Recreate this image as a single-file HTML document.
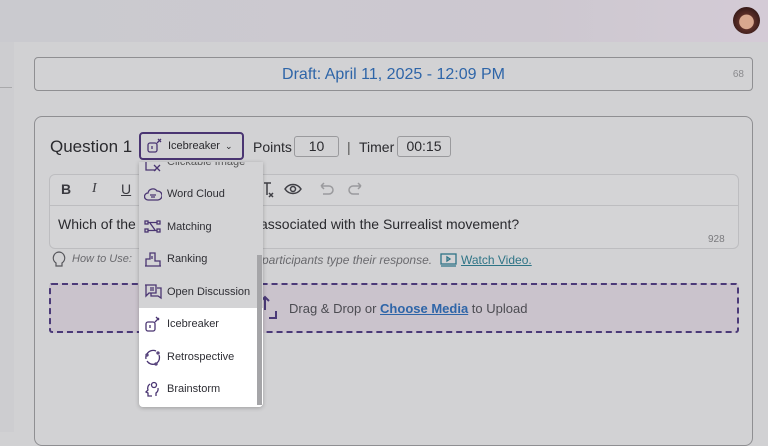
<!DOCTYPE html>
<html><head><meta charset="utf-8"><style>
*{box-sizing:border-box;margin:0;padding:0}
body{width:768px;height:432px;overflow:hidden;background:#d1d1d3;font-family:"Liberation Sans",sans-serif;position:relative;color:#2a2a2e}
.top{position:absolute;left:0;top:0;width:768px;height:42px;background:linear-gradient(90deg,#cacacf,#cdc8d0 70%,#d4cbd6)}
.side{position:absolute;left:0;top:42px;width:14px;height:390px;background:#cdcdd0}
.side:after{content:"";position:absolute;left:0;top:45px;width:12px;height:1px;background:#a9a9ab}
.av{position:absolute;left:733px;top:7px;width:27px;height:27px;border-radius:50%;background:radial-gradient(circle at 50% 55%,#d9a88f 0 35%,#5b2e27 38%,#3a1c1a 70%)}
.draft{position:absolute;left:34px;top:57px;width:719px;height:34px;border:1px solid #8f8f92;border-radius:4px;background:#d2d2d4;text-align:center;line-height:33px;color:#2e65a8;font-size:16px}
.draft span{position:absolute;right:8px;top:0;font-size:10px;color:#8a8a8d}
.card{position:absolute;left:34px;top:116px;width:719px;height:330px;border:1px solid #8f8f92;border-radius:8px;background:#d2d2d4}
.q{position:absolute;left:50px;top:137px;font-size:17px;line-height:20px}
.sel{position:absolute;left:139px;top:132px;width:105px;height:28px;border:2px solid #4a3572;border-radius:4px;font-size:11px;line-height:24px;padding-left:27px}
.lab{position:absolute;font-size:14px;top:139px}
.box{position:absolute;top:136px;height:21px;border:1px solid #9a9a9d;border-radius:3px;font-size:14px;text-align:center;line-height:19px}
.ed{position:absolute;left:49px;top:174px;width:690px;height:75px;border:1px solid #bdbdc0;border-radius:6px;background:#d4d4d6}
.ed .bar{height:31px;border-bottom:1px solid #bdbdc0}
.tb{position:absolute;top:181px;font-size:14px;font-weight:bold;color:#3a3a40}
.txt{position:absolute;top:216px;font-size:14px}
.cnt{position:absolute;left:708px;top:234px;font-size:10px;color:#7a7a7d}
.how{position:absolute;top:253px;font-size:11px;font-style:italic;color:#6a6a6e}
.wv{position:absolute;left:461px;top:253px;font-size:12px;color:#2e7486;text-decoration:underline}
.up{position:absolute;left:49px;top:283px;width:690px;height:50px;border:2px dashed #4b3a78;border-radius:3px;background:#cac3cc}
.upt{position:absolute;left:289px;top:301px;font-size:13px;color:#4c4c52}
.upt b{color:#2e65a8;text-decoration:underline}
.menu{position:absolute;left:139px;top:162px;width:124px;height:245px;background:#d3d3d5;border-radius:0 0 4px 4px;box-shadow:0 1px 4px rgba(0,0,0,.25);overflow:hidden}
.menu .hl{position:absolute;left:0;top:146px;width:124px;height:99px;background:#fff}
.menu .sb{position:absolute;right:1px;top:93px;width:5px;height:150px;background:#a5a5a8}
.it{position:absolute;left:28px;font-size:11px;color:#2e2e34}
.ic{position:absolute;left:5px;width:18px;height:18px}
</style></head><body>
<div class="top"></div><div class="av"></div>
<div class="side"></div>
<div class="draft">Draft: April 11, 2025 - 12:09 PM<span>68</span></div>
<div class="card"></div>
<div class="q">Question 1</div>
<div class="sel">Icebreaker <span style="font-size:9px;margin-left:2px">&#8964;</span>
<svg style="position:absolute;left:5px;top:3px" width="18" height="18" viewBox="0 0 18 18" fill="none" stroke="#4a3572" stroke-width="1.3"><rect x="2" y="6" width="9" height="9" rx="2"/><path d="M6 9v3M11 6l4-4M12 2l3 3"/></svg></div>
<div class="lab" style="left:253px">Points</div>
<div class="box" style="left:294px;width:45px">10</div>
<div class="lab" style="left:347px;color:#555">|</div>
<div class="lab" style="left:359px">Timer</div>
<div class="box" style="left:397px;width:54px">00:15</div>
<div class="ed"><div class="bar"></div></div>
<div class="tb" style="left:61px">B</div>
<div class="tb" style="left:92px;font-style:italic;font-family:'Liberation Serif';font-weight:normal">I</div>
<div class="tb" style="left:121px;text-decoration:underline;font-weight:normal">U</div>
<svg style="position:absolute;left:263px;top:180px" width="110" height="18" viewBox="0 0 110 18" fill="none" stroke="#3f3f45" stroke-width="1.5"><path d="M1 3h7M4 3v12M6 13l4 4M10 13l-4 4"/><path d="M22 9c4-6 12-6 16 0c-4 6-12 6-16 0z"/><circle cx="30" cy="9" r="2.5"/><path stroke="#9a9a9d" d="M58 6h8a4 4 0 0 1 0 8h-6M58 6l3-3M58 6l3 3M98 6h-8a4 4 0 0 0 0 8h6M98 6l-3-3M98 6l-3 3"/></svg>
<div class="txt" style="left:58px">Which of the</div>
<div class="txt" style="left:260px">associated with the Surrealist movement?</div>
<div class="cnt">928</div>
<svg style="position:absolute;left:51px;top:251px" width="16" height="18" viewBox="0 0 16 18" fill="none" stroke="#55555a" stroke-width="1.2"><path d="M8 1a6 6 0 0 0-3 11v3h6v-3a6 6 0 0 0-3-11z"/></svg>
<div class="how" style="left:72px">How to Use:</div>
<div class="how" style="left:262px;font-size:12px">participants type their response.</div>
<svg style="position:absolute;left:440px;top:253px" width="17" height="14" viewBox="0 0 17 14" fill="none" stroke="#2e7486" stroke-width="1.3"><rect x="1" y="1" width="15" height="10"/><path d="M1 13h15M7 4v4l3-2z"/></svg>
<div class="wv">Watch Video.</div>
<div class="up"></div>
<svg style="position:absolute;left:259px;top:294px" width="20" height="26" viewBox="0 0 20 26" fill="none" stroke="#4b3a78" stroke-width="2"><path d="M6 16V3M2 7l4-4 4 4M10 24h7v-7"/></svg>
<div class="upt">Drag &amp; Drop or <b>Choose Media</b> to Upload</div>
<div class="menu">
<div class="hl"></div><div class="sb"></div>
<svg class="ic" style="top:-6px" viewBox="0 0 18 18" fill="none" stroke="#4a3572" stroke-width="1.3"><path d="M2 2v12h10M10 9l6 6M16 9l-6 6"/></svg>
<div class="it" style="top:-6px;color:#555">Clickable Image</div>
<svg class="ic" style="top:23px" viewBox="0 0 18 18" fill="none" stroke="#4a3572" stroke-width="1.3"><path d="M4 15a3.5 3.5 0 0 1 0-7a5 5 0 0 1 9-2a4 4 0 0 1 1 9z M6 10h6M7 12h4"/></svg>
<div class="it" style="top:26px">Word Cloud</div>
<svg class="ic" style="top:56px" viewBox="0 0 18 18" fill="none" stroke="#4a3572" stroke-width="1.3"><rect x="1" y="3" width="3" height="3"/><rect x="1" y="11" width="3" height="3"/><rect x="13" y="3" width="3" height="3"/><rect x="13" y="11" width="3" height="3"/><path d="M4 4.5h9M4 12.5h9M6 5l5 7"/></svg>
<div class="it" style="top:59px">Matching</div>
<svg class="ic" style="top:88px" viewBox="0 0 18 18" fill="none" stroke="#4a3572" stroke-width="1.3"><path d="M1 16h16M2 16V9h4V3h5v8h5v5M8 6v3"/></svg>
<div class="it" style="top:91px">Ranking</div>
<svg class="ic" style="top:121px" viewBox="0 0 18 18" fill="none" stroke="#4a3572" stroke-width="1.3"><path d="M1 2h11v8H5l-3 3V2M6 5h4M6 7h4M13 5h4v10l-3-2H7v-3"/></svg>
<div class="it" style="top:124px">Open Discussion</div>
<svg class="ic" style="top:153px" viewBox="0 0 18 18" fill="none" stroke="#4a3572" stroke-width="1.3"><rect x="2" y="7" width="9" height="9" rx="2"/><path d="M6 10v3M11 7l4-4M12 2l3 3"/></svg>
<div class="it" style="top:156px">Icebreaker</div>
<svg class="ic" style="top:186px" viewBox="0 0 18 18" fill="none" stroke="#4a3572" stroke-width="1.3"><path d="M3 6a7 7 0 0 1 9-3M15 7a7 7 0 0 1-2 8M11 16a7 7 0 0 1-8-3M2 11a7 7 0 0 1 0-3"/><circle cx="3" cy="7" r="1"/><circle cx="14" cy="5" r="1"/><circle cx="12" cy="16" r="1"/></svg>
<div class="it" style="top:189px">Retrospective</div>
<svg class="ic" style="top:218px" viewBox="0 0 18 18" fill="none" stroke="#4a3572" stroke-width="1.3"><circle cx="10" cy="5" r="2.5"/><path d="M6 4a5 5 0 0 0-2 6l-2 2 2 1v3h4M14 8a5 5 0 0 1-2 5v3"/></svg>
<div class="it" style="top:221px">Brainstorm</div>
</div>
</body></html>
